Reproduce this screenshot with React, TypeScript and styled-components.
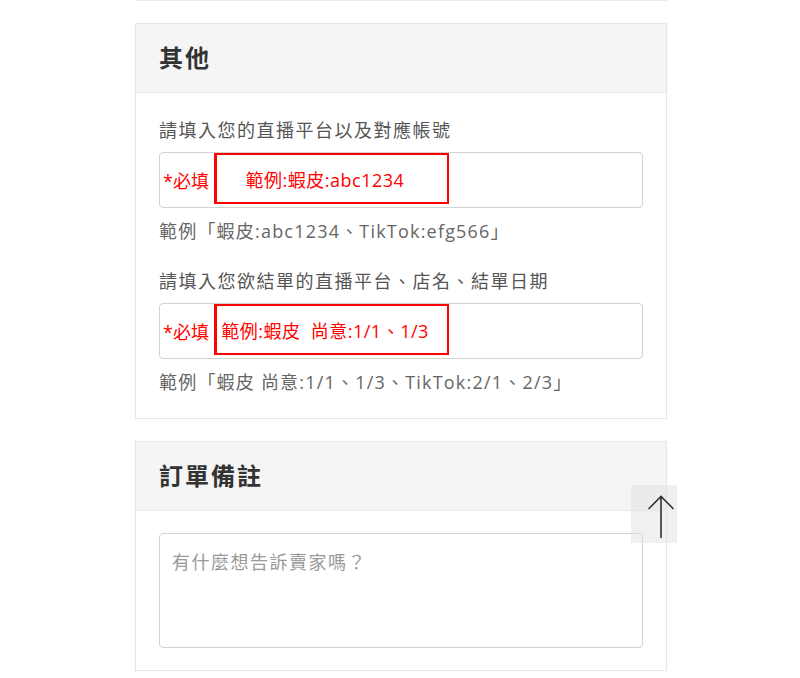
import { createGlobalStyle, styled } from "styled-components";

const GlobalStyle = createGlobalStyle`
  html, body {
    margin: 0;
    padding: 0;
    background: #fff;
  }
  body {
    font-family: "Open Sans", "Noto Sans CJK TC", sans-serif;
    color: #333;
  }
  * {
    box-sizing: border-box;
  }
`;

const Page = styled.div`
  display: flex;
  flex-direction: column;
  align-items: center;
  padding-left: 2px;
`;

const Column = styled.div`
  width: 532px;
  display: flex;
  flex-direction: column;
  gap: 22px;
`;

const PrevCardEdge = styled.div`
  height: 1px;
  border-bottom: 1px solid #ebebeb;
`;

const Card = styled.section`
  border: 1px solid #e6e6e6;
  background: #fff;
`;

const CardHeader = styled.header`
  height: 69px;
  display: flex;
  align-items: center;
  padding: 0 23px 3px;
  background: #f5f5f5;
  border-bottom: 1px solid #ebebeb;
`;

const CardTitle = styled.h2`
  margin: 0;
  font-family: "Noto Sans CJK TC", sans-serif;
  font-size: 24px;
  font-weight: 700;
  letter-spacing: 2px;
  color: #333;
`;

const CardBody = styled.div<{ $top: number; $bottom: number }>`
  display: flex;
  flex-direction: column;
  gap: 25px;
  padding: ${(p) => p.$top}px 23px ${(p) => p.$bottom}px;
`;

const FieldGroup = styled.div`
  display: flex;
  flex-direction: column;
`;

const FieldLabel = styled.label`
  font-size: 18px;
  line-height: 26px;
  letter-spacing: 1.5px;
  color: #555;
`;

const Field = styled.div`
  margin-top: 9px;
  height: 56px;
  display: flex;
  align-items: stretch;
  border: 1px solid #d2d2d2;
  border-radius: 4px;
  background: #fff;
`;

const RequiredTag = styled.span`
  width: 54px;
  flex: none;
  display: flex;
  align-items: center;
  padding-left: 3px;
  font-size: 18px;
  color: #f00;
`;

const ExampleBox = styled.div`
  width: 235px;
  height: 51px;
  display: flex;
  align-items: center;
  justify-content: center;
  padding-right: 14px;
  border: 2px solid #f00;
  border-left-width: 3px;
  font-size: 18px;
  letter-spacing: 0.5px;
  color: #f00;
  white-space: pre;
`;

const FieldHint = styled.p`
  margin: 11px 0 0;
  font-size: 18px;
  line-height: 24px;
  letter-spacing: 1.2px;
  color: #666;
`;

const NoteArea = styled.textarea`
  display: block;
  width: 100%;
  height: 115px;
  padding: 15px 12px;
  border: 1px solid #d2d2d2;
  border-radius: 4px;
  resize: none;
  font-family: "Open Sans", "Noto Sans CJK TC", sans-serif;
  font-size: 18px;
  line-height: 26px;
  letter-spacing: 1.5px;
  color: #333;
  outline: none;

  &::placeholder {
    color: #9a9a9a;
  }
`;

const ScrollTopButton = styled.button`
  position: fixed;
  right: 123px;
  bottom: 135px;
  width: 46px;
  height: 58px;
  padding: 5px 0 0 14px;
  border: none;
  background: rgba(225, 225, 225, 0.5);
  display: flex;
  align-items: center;
  justify-content: center;
`;

type LiveFieldProps = {
  label: string;
  example: string;
  hint: string;
};

const LiveField = ({ label, example, hint }: LiveFieldProps) => (
  <FieldGroup>
    <FieldLabel>{label}</FieldLabel>
    <Field>
      <RequiredTag>*必填</RequiredTag>
      <ExampleBox>{example}</ExampleBox>
    </Field>
    <FieldHint>{hint}</FieldHint>
  </FieldGroup>
);

export default function App() {
  return (
    <Page>
      <GlobalStyle />
      <Column>
        <PrevCardEdge />
        <Card>
          <CardHeader>
            <CardTitle>其他</CardTitle>
          </CardHeader>
          <CardBody $top={24} $bottom={24}>
            <LiveField
              label="請填入您的直播平台以及對應帳號"
              example="範例:蝦皮:abc1234"
              hint="範例「蝦皮:abc1234、TikTok:efg566」"
            />
            <LiveField
              label="請填入您欲結單的直播平台、店名、結單日期"
              example="範例:蝦皮  尚意:1/1、1/3"
              hint="範例「蝦皮 尚意:1/1、1/3、TikTok:2/1、2/3」"
            />
          </CardBody>
        </Card>
        <Card>
          <CardHeader>
            <CardTitle>訂單備註</CardTitle>
          </CardHeader>
          <CardBody $top={22} $bottom={22}>
            <NoteArea placeholder="有什麼想告訴賣家嗎？" />
          </CardBody>
        </Card>
      </Column>
      <ScrollTopButton aria-label="回到頂端">
        <svg width="28" height="44" viewBox="0 0 28 44" fill="none">
          <path
            d="M14 2 V43 M1.5 14 L14 1.5 L26.5 14"
            stroke="#333"
            strokeWidth="1.6"
          />
        </svg>
      </ScrollTopButton>
    </Page>
  );
}
